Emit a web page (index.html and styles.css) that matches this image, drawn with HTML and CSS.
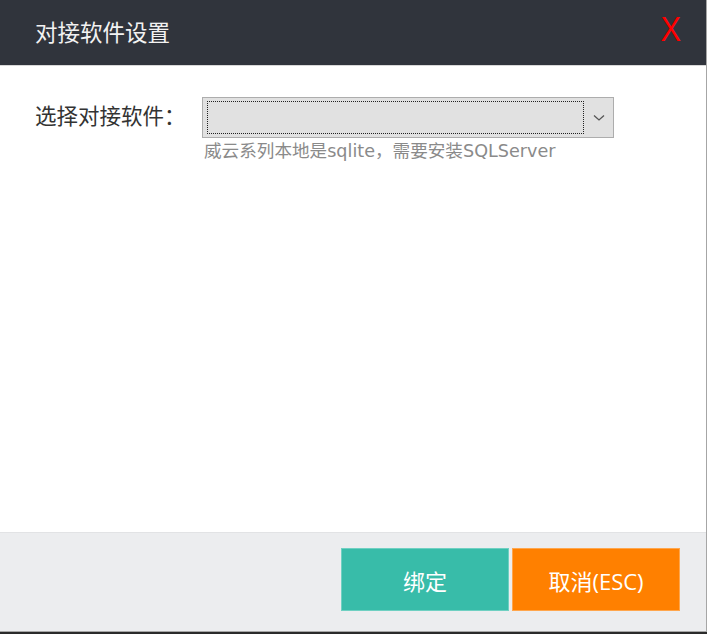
FILE: index.html
```html
<!doctype html>
<html lang="zh-CN">
<head>
<meta charset="UTF-8">
<title>对接软件设置</title>
<link rel="stylesheet" href="styles.css">
</head>
<body>
	<div class="dialog">
		<!-- 标题栏 -->
		<div class="title_bar">
			<span class="title">对接软件设置</span>
			<span class="close_btn">X</span>
		</div>
		<!-- 内容 -->
		<div class="content">
			<div class="form_row">
				<label class="form_label">选择对接软件：</label>
				<div class="field">
					<div class="select_box">
						<div class="select_focus"></div>
						<svg class="select_arrow" width="12" height="8" viewBox="0 0 12 8">
							<polyline points="1,1.5 6,6 11,1.5" fill="none" stroke="#555" stroke-width="1.3"/>
						</svg>
					</div>
					<div class="hint">威云系列本地是sqlite，需要安装SQLServer</div>
				</div>
			</div>
		</div>
		<!-- 按钮 -->
		<div class="footer">
			<button class="btn btn_bind">绑定</button>
			<button class="btn btn_cancel">取消(ESC)</button>
		</div>
	</div>
</body>
</html>
```

FILE: styles.css
```css
html, body{
	margin:0; padding:0;
	background-color:#ffffff;
}
body{
	width:709px; height:634px;
	overflow:hidden;
	font-family:"Open Sans", "Noto Sans CJK SC", sans-serif;
}
.dialog{
	width:706px; height:631px;
	border-right:1px solid #a6a6a6;
	border-bottom:1px solid #a6a6a6;
	display:flex; flex-direction:column;
	background-color:#ffffff;
	box-shadow:0 2px 0 #2a2a2a;
}
.title_bar{
	height:65px;
	background-color:#30343c;
	border-bottom:1px solid #d8d8d8;
	display:flex; align-items:center; justify-content:space-between;
	padding:0 24px 0 35px;
}
.title{
	color:#f2f2f2; font-size:22.5px;
	line-height:30px;
}
.close_btn{
	color:#ff0000; font-size:35px;
	font-family:"Liberation Sans", sans-serif;
	line-height:40px; margin-top:-7px;
	transform:scaleX(0.88);
}
.content{
	flex:1;
	padding:31px 0 0 35px;
}
.form_row{
	display:flex; align-items:flex-start;
}
.form_label{
	width:167px;
	font-size:21.5px; color:#333333;
	line-height:28px; margin-top:5px;
	white-space:nowrap;
}
.field{
	display:flex; flex-direction:column;
}
.select_box{
	width:410px; height:39px;
	border:1px solid #adadad;
	background-color:#e1e1e1;
	position:relative;
}
.select_focus{
	position:absolute;
	left:4px; top:3px;
	width:375px; height:31px;
	border:1px dotted #222222;
}
.select_arrow{
	position:absolute;
	right:8px; top:16px;
}
.hint{
	font-family:"DejaVu Sans", "Noto Sans CJK SC", sans-serif;
	font-size:17.6px; color:#8a8a8a;
	line-height:22px; margin-left:2px;
	margin-top:2px;
}
.footer{
	height:99px;
	background-color:#ecedef;
	border-top:1px solid #e2e3e5;
	display:flex; justify-content:flex-end; align-items:flex-start;
	gap:3px;
	padding:15px 26px 0 0;
	box-sizing:border-box;
}
.btn{
	width:168px; height:63px;
	border:1px solid transparent;
	font-family:"Open Sans", "Noto Sans CJK SC", sans-serif;
	font-size:22px; color:#ffffff;
	padding:0;
}
.btn_bind{
	background-color:#38bca9; border-color:#6fd0c2;
}
.btn_cancel{
	background-color:#ff8000; border-color:#ffa64d;
}
```
